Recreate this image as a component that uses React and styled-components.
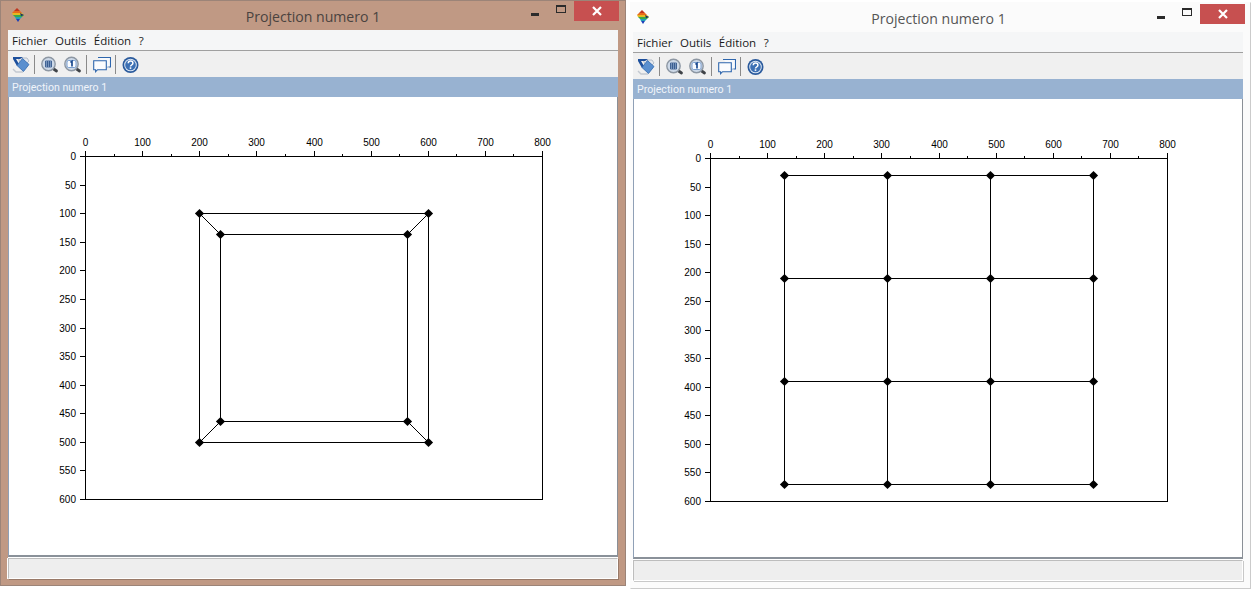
import React from "react";
import styled, { createGlobalStyle } from "styled-components";

const Global = createGlobalStyle`
  html, body { margin: 0; padding: 0; background: #fff; }
  #root { width: 1256px; height: 598px; overflow: hidden; }
`;

const Page = styled.div`
  display: flex;
  align-items: flex-start;
  gap: 4px;
  width: 1256px;
  height: 598px;
  background: #fff;
`;

const Win = styled.section`
  box-sizing: border-box;
  display: flex;
  flex-direction: column;
  flex: none;
  width: ${(p) => (p.$active ? 626 : 621)}px;
  height: ${(p) => (p.$active ? 586 : 587)}px;
  margin-top: ${(p) => (p.$active ? 0 : 2)}px;
  padding: 0 ${(p) => (p.$active ? "7px 6px 7px" : "6px 7px 2px")};
  background: ${(p) => (p.$active ? "#c09984" : "#fbfbfb")};
  border: 1px solid ${(p) => (p.$active ? "#9c8478" : "#cbcbcb")};
  border-left-color: ${(p) => (p.$active ? "#9c8478" : "#fbfbfb")};
  border-top-color: ${(p) => (p.$active ? "#9c8478" : "#fbfbfb")};
`;

const TitleBar = styled.header`
  position: relative;
  display: flex;
  align-items: center;
  justify-content: center;
  flex: none;
  height: 29px;
`;

const AppIcon = styled.svg`
  position: absolute;
  left: 4px;
  top: 7px;
  width: 12px;
  height: 14px;
`;

const Title = styled.h1`
  margin: 0;
  padding-top: 1px;
  font: 400 14.1px "Open Sans", sans-serif;
  color: ${(p) => (p.$active ? "#4a4340" : "#555")};
`;

const Controls = styled.div`
  position: absolute;
  right: -1px;
  top: ${(p) => (p.$active ? 0 : 1)}px;
  display: flex;
  align-items: flex-start;
`;

const Control = styled.div`
  display: flex;
  align-items: center;
  justify-content: center;
  width: 26px;
  height: 20px;
`;

const Close = styled(Control)`
  width: 45px;
  background: #c75050;
`;

const MinGlyph = styled.i`
  display: block;
  width: 8px;
  height: 3px;
  margin-top: 6px;
  background: #2b2b2b;
`;

const MaxGlyph = styled.i`
  box-sizing: border-box;
  display: block;
  width: 10px;
  height: 8px;
  margin-top: -4px;
  border: 1px solid #2b2b2b;
  border-top-width: 2px;
`;

const Inner = styled.div`
  display: flex;
  flex-direction: column;
  flex: 1;
  min-height: 0;
  width: 610px;
`;

const MenuBar = styled.nav`
  box-sizing: border-box;
  display: flex;
  align-items: center;
  gap: 7.5px;
  flex: none;
  height: 21px;
  padding-left: 4px;
  background: #f5f6f7;
  border-bottom: 1px solid #a0a0a0;
  font: 400 11.5px "Open Sans", sans-serif;
  color: #1a1a1a;
`;

const ToolBar = styled.div`
  display: flex;
  align-items: center;
  flex: none;
  height: 26px;
  padding-left: 1.5px;
  background: #f0f0f0;
`;

const Tool = styled.svg`
  flex: none;
  width: 18px;
  height: 18px;
  margin: 0 2.5px;
`;

const ToolSep = styled.span`
  flex: none;
  width: 1px;
  height: 19px;
  margin: 0 3.5px 0 1.5px;
  background: #8a8a8a;
`;

const DocHeader = styled.div`
  box-sizing: border-box;
  flex: none;
  height: 20px;
  padding: 4px 0 0 4px;
  background: #98b2d1;
  font: 400 10.6px/14px "Roboto", sans-serif;
  color: #f0f4fa;
`;

const Canvas = styled.main`
  flex: 1;
  min-height: 0;
  background: #fff;
  border-left: 1px solid #8fa0b6;
  border-right: 1px solid #8a8f96;
  border-bottom: 2px solid #8a9199;
  overflow: hidden;
`;

const ChartSvg = styled.svg`
  display: block;
  width: 608px;
  height: 458px;
  shape-rendering: crispEdges;
  font: 400 10px "Liberation Sans", sans-serif;
  fill: #000;
`;

const StatusBar = styled.footer`
  box-sizing: border-box;
  flex: none;
  height: 21px;
  margin-top: 1px;
  background: #eeeeee;
  border: 1px solid #bdbdbd;
  border-right-color: #fff;
  border-bottom-color: #fff;
  box-shadow: 0 -1px 0 #fff, -1px 0 0 #fff, 1px 1px 0 rgba(0, 0, 0, 0.2);
`;

const SCALE = 457 / 800;
const OX = 76.5;
const OY = 59.5;
const px = (x) => Math.round(OX + x * SCALE - 0.5) + 0.5;
const py = (y) => Math.round(OY + y * (343 / 600) - 0.5) + 0.5;

const range = (to, step) => {
  const out = [];
  for (let v = 0; v <= to; v += step) out.push(v);
  return out;
};

const Axes = () => (
  <g stroke="#000" fill="none">
    <rect x={px(0)} y={py(0)} width={px(800) - px(0)} height={py(600) - py(0)} />
    {range(800, 50).map((v) => (
      <line key={`x${v}`} x1={px(v)} x2={px(v)} y1={py(0)} y2={py(0) - (v % 100 === 0 ? 6 : 3)} />
    ))}
    {range(600, 50).map((v) => (
      <line key={`y${v}`} x1={px(0)} x2={px(0) - 6} y1={py(v)} y2={py(v)} />
    ))}
  </g>
);

const Labels = () => (
  <g style={{ shapeRendering: "auto" }}>
    {range(800, 100).map((v) => (
      <text key={`tx${v}`} x={px(v)} y={49} textAnchor="middle">{v}</text>
    ))}
    {range(600, 50).map((v) => (
      <text key={`ty${v}`} x={67} y={py(v) + 3} textAnchor="end">{v}</text>
    ))}
  </g>
);

const Node = ({ x, y }) => (
  <polygon
    points={`${px(x)},${py(y) - 4.6} ${px(x) + 4.6},${py(y)} ${px(x)},${py(y) + 4.6} ${px(x) - 4.6},${py(y)}`}
    fill="#000"
    style={{ shapeRendering: "auto" }}
  />
);

const Segment = ({ a, b }) => (
  <line
    x1={px(a[0])}
    y1={py(a[1])}
    x2={px(b[0])}
    y2={py(b[1])}
    stroke="#000"
    style={{ shapeRendering: a[0] !== b[0] && a[1] !== b[1] ? "auto" : "crispEdges" }}
  />
);

const Chart = ({ segments, nodes }) => (
  <ChartSvg viewBox="0 0 608 458">
    <Axes />
    <Labels />
    {segments.map(([a, b], i) => (
      <Segment key={i} a={a} b={b} />
    ))}
    {nodes.map(([x, y], i) => (
      <Node key={i} x={x} y={y} />
    ))}
  </ChartSvg>
);

const outer = [[200, 100], [600, 100], [600, 500], [200, 500]];
const inner = [[237, 136], [563, 136], [563, 463], [237, 463]];
const squareSegments = [0, 1, 2, 3].flatMap((i) => {
  const n = (i + 1) % 4;
  return [[outer[i], outer[n]], [inner[i], inner[n]], [outer[i], inner[i]]];
});
const squareNodes = [...outer, ...inner];

const gx = [130, 310, 490, 670];
const gy = [30, 210, 390, 570];
const gridSegments = [
  ...gx.map((x) => [[x, 30], [x, 570]]),
  ...gy.map((y) => [[130, y], [670, y]]),
];
const gridNodes = gx.flatMap((x) => gy.map((y) => [x, y]));

const Logo = () => (
  <AppIcon viewBox="0 0 12 14">
    <polygon points="5,0 8,3 2,3" fill="#c0361e" />
    <polygon points="2,3 8,3 10,5 0,5" fill="#e86a1a" />
    <polygon points="0,5 10,5 12,7 1,7" fill="#e6b820" />
    <polygon points="1,7 12,7 10,9 3,9" fill="#3aa84a" />
    <polygon points="3,9 10,9 8,11 4,11" fill="#20a0b8" />
    <polygon points="4,11 8,11 6,14" fill="#1c3fb8" />
    <polygon points="8,5 12,7 9,8" fill="#1a2c6a" />
  </AppIcon>
);

const ExportIcon = () => (
  <Tool viewBox="0 0 18 18">
    <path d="M6 3h9l2 3-3 3H9z" fill="#e6e9ee" stroke="#b4bcc7" />
    <path d="M1 14l3 3h7" fill="none" stroke="#c2c8d0" strokeWidth="1.4" />
    <path d="M1 2h10l-3 2H4l3 5-2 2-4-7z" fill="#1d4f9c" />
    <path d="M10.5 3.5l6.5 6-5.5 7L5 10.5z" fill="#5a8fcf" stroke="#2f67ad" strokeWidth=".8" />
  </Tool>
);

const Magnifier = ({ children }) => (
  <Tool viewBox="0 0 18 18">
    <path d="M12 13.5l3.5 2.5" stroke="#3f4348" strokeWidth="2.8" strokeLinecap="round" />
    <circle cx="7.5" cy="9" r="6.7" fill="#cdd9e8" stroke="#8d97a3" strokeWidth="1.4" />
    {children}
  </Tool>
);

const GridIcon = () => (
  <Magnifier>
    <path d="M4.5 6h6v6h-6zM4.5 8h6M4.5 10h6M6.5 6v6M8.5 6v6" fill="#a9c3e2" stroke="#2b4f85" strokeWidth=".8" />
  </Magnifier>
);

const OneIcon = () => (
  <Magnifier>
    <rect x="3" y="5.5" width="9" height="7" rx="1.5" fill="#f8fbff" stroke="#5f8cc4" strokeWidth=".8" />
    <path d="M6.4 7.4L8 6.4V11.6" stroke="#1c4a90" strokeWidth="1.7" fill="none" />
  </Magnifier>
);

const BubblesIcon = () => (
  <Tool viewBox="0 0 18 18">
    <path d="M5 2.5h12.5v9.5h-2" fill="#f7f9fc" stroke="#2e66ad" strokeWidth="1.1" />
    <path d="M.7 5.7h12.6v9H4.6l-2 2v-2H.7z" fill="#fbfcfe" stroke="#2e66ad" strokeWidth="1.1" />
    <path d="M14 12.5l1.5-1" stroke="#9eb8d8" />
  </Tool>
);

const HelpIcon = () => (
  <Tool viewBox="0 0 18 18">
    <circle cx="8.5" cy="10" r="8" fill="#2a5a9c" />
    <circle cx="8.5" cy="10" r="6.3" fill="#dbe6f3" />
    <circle cx="8.5" cy="10" r="5.3" fill="#3c70b4" />
    <path d="M6.3 8.2c0-2.8 4.6-2.8 4.6 0 0 1.8-2.4 1.8-2.4 3.4" fill="none" stroke="#fff" strokeWidth="1.5" />
    <rect x="7.7" y="12.3" width="1.6" height="1.6" fill="#fff" />
  </Tool>
);

const CloseGlyph = () => (
  <svg width="10" height="10" viewBox="0 0 10 10">
    <path d="M1 1l8 8M9 1l-8 8" stroke="#fff" strokeWidth="2.2" />
  </svg>
);

const ProjectionWindow = ({ active, segments, nodes }) => (
  <Win $active={active}>
    <TitleBar>
      <Logo />
      <Title $active={active}>Projection numero 1</Title>
      <Controls $active={active}>
        <Control><MinGlyph /></Control>
        <Control><MaxGlyph /></Control>
        <Close><CloseGlyph /></Close>
      </Controls>
    </TitleBar>
    <Inner>
      <MenuBar>
        <span>Fichier</span>
        <span>Outils</span>
        <span>Édition</span>
        <span>?</span>
      </MenuBar>
      <ToolBar>
        <ExportIcon />
        <ToolSep />
        <GridIcon />
        <OneIcon />
        <ToolSep />
        <BubblesIcon />
        <ToolSep />
        <HelpIcon />
      </ToolBar>
      <DocHeader>Projection numero 1</DocHeader>
      <Canvas>
        <Chart segments={segments} nodes={nodes} />
      </Canvas>
      <StatusBar />
    </Inner>
  </Win>
);

export default function App() {
  return (
    <Page>
      <Global />
      <ProjectionWindow active segments={squareSegments} nodes={squareNodes} />
      <ProjectionWindow segments={gridSegments} nodes={gridNodes} />
    </Page>
  );
}
